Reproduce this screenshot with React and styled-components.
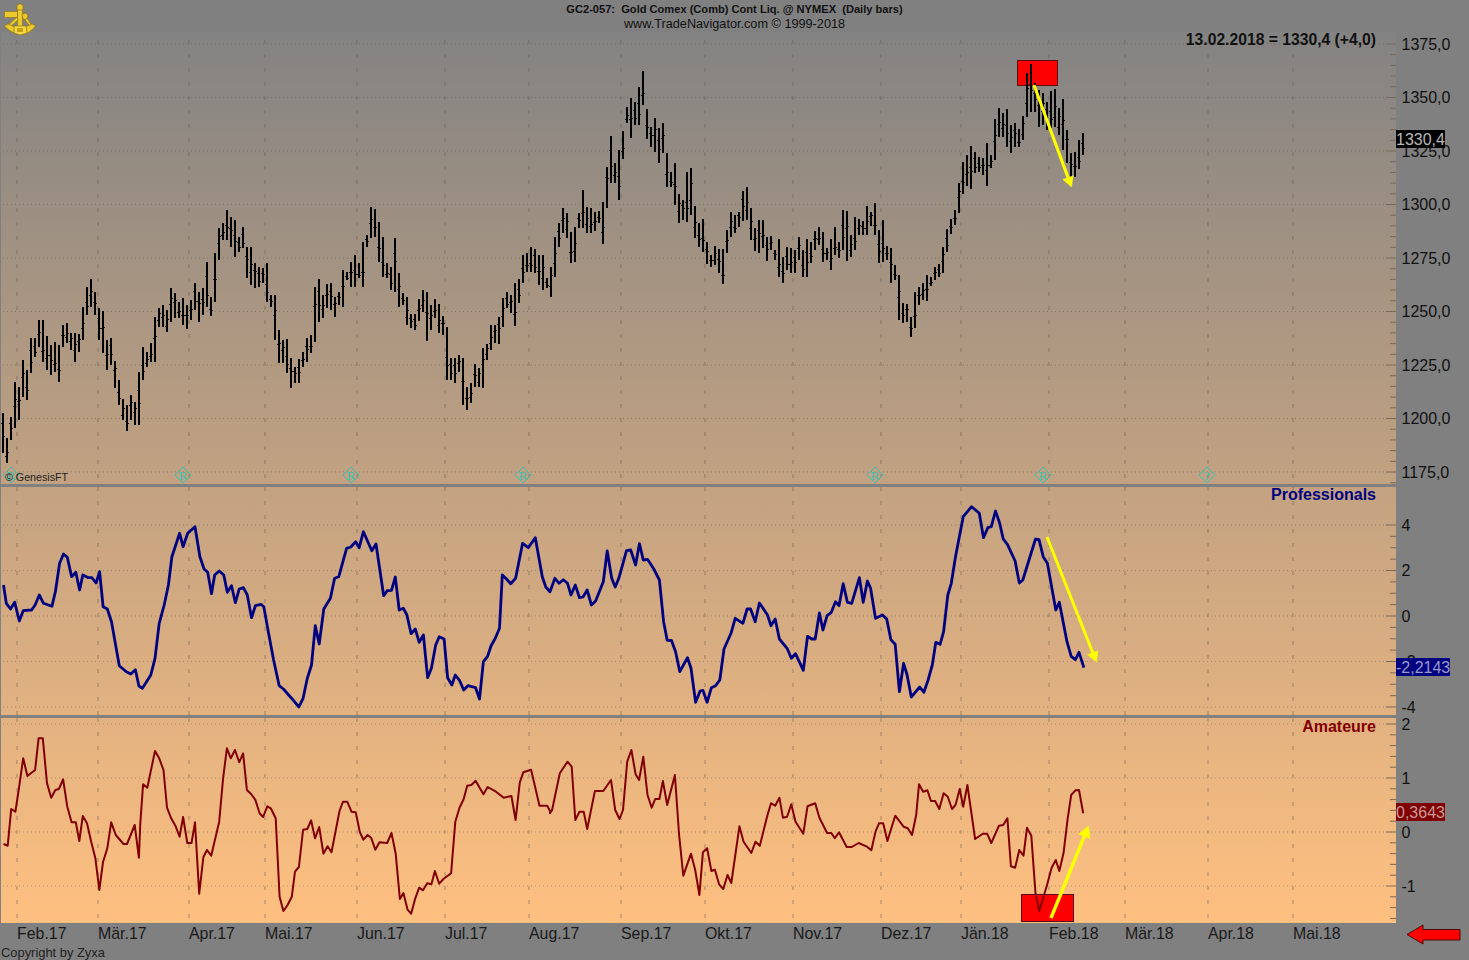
import React from 'react';
import styled, { createGlobalStyle } from 'styled-components';

// colours sampled from the reference
const GREY = '#808080';
const NAVY = '#000080';
const MAROON = '#800000';

const GlobalStyle = createGlobalStyle`
  html, body {
    margin: 0;
    padding: 0;
    background: ${GREY};
    font-family: "Liberation Sans", Arial, sans-serif;
    color: #111;
  }
`;

const Page = styled.div`
  width: 1469px;
  height: 960px;
  display: flex;
  flex-direction: column;
  overflow: hidden;
  background: ${GREY};
`;

const Header = styled.header`
  position: relative;
  height: 32px;
  flex: none;
  text-align: center;
  padding-top: 2px;
  box-sizing: border-box;
`;

const LogoWrap = styled.div`
  position: absolute;
  left: 2px;
  top: 2px;
  width: 36px;
  height: 34px;
`;

const Symbol = styled.div`
  font-size: 11.1px;
  line-height: 15px;
  font-weight: bold;
  white-space: pre;
`;

const Site = styled.div`
  font-size: 12.7px;
  line-height: 15px;
`;

const ChartRow = styled.div`
  display: flex;
  height: 891px;
  flex: none;
`;

const Plot = styled.div`
  width: 1396px;
  display: flex;
  flex-direction: column;
  background: linear-gradient(180deg, #838383 0%, #ffc080 100%);
  box-shadow: inset 1px 0 0 ${GREY};
`;

const Pane = styled.div`
  position: relative;
  height: ${p => p.$h}px;
  flex: none;

  svg {
    display: block;
  }
`;

const Divider = styled.div`
  height: 3px;
  flex: none;
  background: ${GREY};
`;

const ReadOut = styled.div`
  position: absolute;
  right: 20px;
  top: ${p => p.$top}px;
  font-size: ${p => p.$size || 16}px;
  line-height: 20px;
  font-weight: bold;
  color: ${p => p.$color || '#111'};
`;

const Watermark = styled.div`
  position: absolute;
  left: 5px;
  bottom: 0;
  font-size: 10.7px;
  line-height: 13px;
  color: #222;
`;

const Axis = styled.div`
  flex: 1;
  display: flex;
  flex-direction: column;
`;

const AxisPane = styled.div`
  position: relative;
  height: ${p => p.$h}px;
  flex: none;
`;

const AxisLabel = styled.span`
  position: absolute;
  left: 5.5px;
  font-size: 16px;
  line-height: 20px;
  color: #111;
`;

const ValueBox = styled.span`
  position: absolute;
  left: 0;
  height: 18px;
  font-size: 16px;
  line-height: 20px;
  background: ${p => p.$bg};
  color: ${p => p.$fg};
`;

const TimeRow = styled.div`
  height: 22px;
  flex: none;
  display: flex;
  align-items: center;
  padding-left: 17px;
`;

const Month = styled.span`
  flex: none;
  font-size: 15.9px;
  line-height: 20px;
  color: #1a1a1a;
`;

const BackArrow = styled.svg`
  margin-left: auto;
  margin-right: 8px;
  width: 55px;
  height: 21px;
  flex: none;
`;

const Footer = styled.div`
  flex: 1;
  padding-left: 1px;
  font-size: 12.9px;
  line-height: 15px;
  color: #222;
`;

const W = 1396;
const SPLIT = 550;
const XS = 1568 / 550;

const MONTHS = [
  ['Feb.17', 17], ['Mär.17', 98], ['Apr.17', 189], ['Mai.17', 265], ['Jun.17', 357], ['Jul.17', 445],
  ['Aug.17', 529], ['Sep.17', 621], ['Okt.17', 705], ['Nov.17', 793], ['Dez.17', 881], ['Jän.18', 961],
  ['Feb.18', 1049], ['Mär.18', 1125], ['Apr.18', 1208], ['Mai.18', 1293],
];

// hi / lo of each daily bar, traced from crops of the chart
const BARS_A = [
  [670,790],[745,820],[680,750],[575,715],[590,690],[510,620],[540,630],[445,550],[445,500],[390,470],
  [390,515],[438,540],[465,555],[455,545],[465,575],[405,470],[398,460],[430,480],[430,515],[432,485],
  [352,450],[292,375],[268,350],[305,375],[355,450],[362,488],[450,540],[445,525],[512,595],[570,645],
  [628,690],[645,722],[616,690],[635,705],[545,705],[470,570],[485,532],[460,515],[380,515],[355,410],
  [345,412],[360,425],[295,395],[310,385],[335,385],[323,405],[345,418],[330,390],[278,360],[305,395],
  [295,375],[215,350],[320,378],[190,335],[115,210],[100,150],[60,150],[80,170],[90,200],[140,185],
  [110,175],[170,265],[172,285],[220,295],[230,292],[235,280],[220,335],[315,350],[315,450],[420,520],
  [450,520],[448,550],[505,595],[530,578],[508,578],[485,530],[445,515],[435,490],[292,455],[268,395],
  [315,385],[282,355],[278,360],[320,380],[305,345],[240,350],[245,270],[215,290],[195,290],[220,265],
  [155,292],[135,172],[52,145],[58,142],[95,215],[142,260],[220,265],[230,300],[145,305],[248,350],
  [310,345],[320,405],[372,415],[372,420],[328,392],[300,365],[305,452],[345,420],[328,385],[342,430],
  [378,435],[412,570],[505,570],[505,580],[495,545],[505,645],[590,660],[578,638],[522,590],[535,590],
  [475,595],[462,510],[405,480],[405,460],[382,462],[325,412],[305,355],[315,370],[280,408],[268,340],
  [195,280],[190,245],[170,245],[178,248],[195,285],[195,300],[265,295],
].map(([h, l]) => [h / 3 + 190, l / 3 + 190]);

const BARS_B = [
  [620,710],[532,650],[490,560],[445,520],[458,535],[515,610],[500,605],[460,505],[390,505],[440,520],
  [445,518],[455,512],[452,490],[425,553],[320,445],[228,368],[310,368],[270,420],[212,298],[140,190],
  [115,235],[125,195],[80,195],[33,135],[148,238],[200,262],[175,275],[205,310],[190,280],[280,382],
  [335,380],[308,435],[402,490],[420,480],[335,485],[325,465],[438,535],[488,560],[478,575],[545,612],
  [585,620],[558,615],[568,638],[568,672],[510,578],[455,530],[465,520],[455,500],[392,482],[380,480],
  [445,540],[505,572],[480,578],[480,565],[530,603],[528,570],[570,600],[538,650],[590,668],[562,630],
  [565,640],[570,638],[530,600],[570,652],[538,650],[545,610],[512,570],[502,555],[515,605],[565,600],
  [538,630],[500,585],[545,595],[450,570],[452,602],[525,592],[470,570],[478,525],[482,525],[438,525],
  [455,498],[430,525],[510,608],[480,605],[558,600],[565,670],[615,660],[645,780],[728,790],[732,785],
  [770,830],[695,805],[680,735],[668,720],[645,722],[652,678],[620,660],[612,650],[560,638],[508,575],
  [478,522],[450,495],[370,460],[305,402],[285,378],[258,388],[275,340],[290,335],[295,345],[250,378],
  [285,325],[178,300],[145,230],[160,230],[148,262],[195,278],[190,262],[208,260],[168,240],[40,172],
  [12,155],[70,155],[90,200],[98,195],[125,210],[92,205],[88,200],[145,225],[118,270],[210,310],
  [278,350],[275,350],[240,328],[220,285],
].map(([h, l]) => [h / 3 + 60, l / 3 + 60]);

const BARS = [...BARS_A, ...BARS_B];

const BLUE_A = '10,270 18,325 30,342 42,322 55,378 66,347 90,345 100,330 112,300 124,325 148,334 158,290 170,205 181,177 192,187 204,245 216,232 227,285 236,240 252,248 262,248 274,264 284,230 294,335 306,342 318,380 340,512 360,530 373,537 386,524 396,573 406,580 430,540 442,490 454,385 468,330 480,270 490,185 512,115 522,155 535,115 556,95 570,185 582,222 592,232 603,296 612,240 625,228 638,240 648,292 660,272 671,323 682,282 694,278 705,300 717,368 728,332 744,328 752,335 765,410 780,495 796,572 808,582 830,608 852,636 864,610 876,550 888,510 899,392 910,447 923,342 942,310 954,250 966,245 988,160 1000,156 1014,140 1024,158 1036,110 1060,167 1072,147 1094,302 1104,287 1116,286 1127,246 1138,345 1150,340 1160,360 1172,416 1184,402 1195,442 1207,420 1219,548 1230,520 1242,450 1252,425 1266,432 1276,548 1288,570 1298,540 1310,556 1322,585 1334,572 1356,578 1367,612 1378,500 1390,484 1400,452 1412,430 1424,400 1432,240 1444,252 1456,266 1470,250 1490,145 1506,158 1526,128 1546,245 1556,276 1568,290';
const BLUE_B = '0,290 14,250 26,265 38,254 50,265 60,300 72,270 84,308 94,306 106,285 118,330 130,318 152,260 163,168 176,250 186,276 196,250 218,167 230,165 244,210 255,146 266,195 278,193 296,222 312,255 324,380 334,436 346,436 358,470 370,530 392,488 402,520 415,622 428,588 436,586 448,622 460,578 472,572 484,555 496,462 516,415 528,370 550,385 562,342 572,342 585,380 597,324 620,360 630,392 642,372 654,432 676,460 688,490 700,476 722,526 734,424 746,432 756,432 768,354 778,405 790,362 802,352 814,320 824,332 836,266 848,322 860,325 882,248 893,322 905,258 914,280 928,370 948,360 960,372 972,434 984,448 996,590 1008,505 1018,540 1030,606 1054,576 1066,592 1078,555 1090,510 1100,442 1112,448 1122,410 1134,300 1144,265 1156,185 1178,65 1202,35 1224,55 1236,128 1248,98 1258,95 1270,48 1282,85 1292,132 1304,148 1326,198 1338,264 1348,255 1384,132 1394,134 1406,185 1418,205 1442,345 1452,322 1474,440 1486,484 1498,494 1508,472 1522,518';
const RED_A = '10,1047 22,1052 32,942 44,950 54,880 66,790 78,843 100,825 110,730 122,730 134,865 146,908 158,885 168,882 180,853 192,935 204,982 216,982 226,1038 236,963 248,985 260,1040 272,1090 283,1185 294,1100 306,1060 317,982 330,1020 352,1047 362,1047 384,990 396,1088 400,985 408,868 420,878 442,768 454,790 466,825 476,938 488,970 500,992 512,1025 522,966 534,1044 546,1044 556,982 568,1196 580,1086 590,1065 602,1082 625,980 636,850 647,760 658,790 670,765 682,802 693,775 704,885 716,897 728,915 740,955 750,966 762,934 772,940 786,970 797,1205 808,1248 820,1230 832,1205 841,1130 852,1116 864,1004 876,1002 887,976 898,1030 910,996 922,1076 934,1054 945,1072 968,948 978,920 990,920 1002,950 1014,952 1026,1012 1036,1034 1048,1020 1058,1028 1070,1064 1082,1042 1104,1044 1116,1014 1128,1076 1140,1212 1150,1194 1162,1244 1172,1256 1184,1210 1195,1178 1206,1186 1218,1165 1230,1168 1240,1128 1252,1166 1264,1152 1286,1135 1298,980 1310,938 1322,912 1332,872 1344,870 1356,857 1378,898 1390,876 1414,890 1436,908 1458,903 1470,975 1482,862 1492,832 1514,824 1538,932 1560,932 1568,948';
const RED_B = '0,955 6,945 28,835 50,800 62,815 72,975 84,950 96,950 106,1002 128,888 152,888 174,855 186,945 198,972 208,945 220,800 232,765 244,838 254,855 266,785 278,900 290,938 300,912 312,912 322,858 334,930 356,840 368,1020 380,1142 402,1076 414,1125 426,1200 436,1072 448,1060 460,1128 470,1124 482,1168 494,1182 506,1140 517,1164 540,994 552,1040 574,1074 586,1040 598,1052 620,960 630,925 642,932 654,908 664,968 676,965 688,928 700,980 722,1016 734,934 756,925 768,968 790,1014 802,1014 812,1030 824,1012 846,1056 860,1056 880,1044 902,1054 916,1066 928,1010 938,985 950,985 962,1038 984,962 1008,995 1020,1000 1032,1020 1044,960 1052,868 1064,890 1076,886 1086,918 1098,918 1110,942 1122,895 1134,905 1146,942 1156,930 1168,882 1178,935 1190,870 1212,1032 1234,1016 1246,1016 1258,1044 1280,992 1292,990 1304,970 1314,1114 1326,1118 1338,1065 1350,1082 1360,998 1372,1022 1384,1195 1395,1248 1418,1166 1430,1118 1442,1095 1452,1128 1464,1075 1476,970 1486,900 1498,886 1508,885 1520,955';

// crop coordinates back to page coordinates
const toPage = (str, dx) =>
  str.split(' ').map(pt => {
    const [x, y] = pt.split(',').map(Number);
    return `${(dx + x / XS).toFixed(1)},${(y / 3 + 495).toFixed(1)}`;
  }).join(' ');

const bluePts = `${toPage(BLUE_A, 0)} ${toPage(BLUE_B, SPLIT)}`;
const redPts = `${toPage(RED_A, 0)} ${toPage(RED_B, SPLIT)}`;

const rnd = i => {
  const v = Math.sin(i * 12.9898) * 43758.5453;
  return v - Math.floor(v);
};

const Scale = ({ top, height, levels, subdivide, step }) => {
  const bottom = top + height;
  const ticks = [];
  levels.forEach((y, n) => {
    ticks.push(<line key={`M${n}`} x1={W - 10} x2={W} y1={y} y2={y} stroke="#77685a" />);
    for (let k = 1; k < subdivide; k++) {
      const ty = y + (k * step) / subdivide;
      if (ty < bottom) {
        ticks.push(<line key={`m${n}-${k}`} x1={W - 6} x2={W} y1={ty} y2={ty} stroke="#77685a" />);
      }
    }
  });
  return (
    <g>
      {levels.map(y => (
        <line key={y} x1="3" x2={W - 10} y1={y} y2={y} stroke="#5a5048" strokeOpacity=".42" strokeDasharray="1 3" />
      ))}
      {MONTHS.map(([m, x]) => (
        <line key={m} x1={x} x2={x} y1={Math.max(top, 40)} y2={bottom} stroke="#5a5048" strokeOpacity=".5" strokeDasharray="4 10" />
      ))}
      {ticks}
    </g>
  );
};

const Arrow = ({ from, to, width, head }) => {
  const [x1, y1] = from;
  const [x2, y2] = to;
  const len = Math.hypot(x2 - x1, y2 - y1);
  const ux = (x2 - x1) / len;
  const uy = (y2 - y1) / len;
  const bx = x2 - ux * head;
  const by = y2 - uy * head;
  const hw = head * 0.55;
  return (
    <g fill="#ffff00" stroke="#ffff00">
      <line x1={x1} y1={y1} x2={bx} y2={by} strokeWidth={width} />
      <polygon points={`${x2},${y2} ${bx - uy * hw},${by + ux * hw} ${bx + uy * hw},${by - ux * hw}`} strokeWidth=".5" />
    </g>
  );
};

const Marker = ({ x, glyph = 'R' }) => (
  <g stroke="#3dbfb0" fill="none">
    <polygon points={`${x - 8},475 ${x},467 ${x + 8},475 ${x},483`} strokeWidth="1" />
    <text x={x} y="480" textAnchor="middle" fontSize="13" fontFamily="Liberation Serif, serif" fill="#3dbfb0" stroke="none">{glyph}</text>
  </g>
);

const PriceBars = () => (
  <g stroke="#000" shapeRendering="crispEdges">
    {BARS.map(([hi, lo], i) => {
      const x = 3 + i * 4;
      const open = Math.round(hi + (lo - hi) * (0.25 + rnd(i) * 0.5));
      const close = Math.round(hi + (lo - hi) * (0.25 + rnd(i + 500) * 0.5));
      return (
        <g key={i}>
          <line x1={x} x2={x} y1={Math.round(hi)} y2={Math.round(lo)} strokeWidth="2" />
          <line x1={x - 2} x2={x} y1={open} y2={open} strokeWidth="1" />
          <line x1={x} x2={x + 2} y1={close} y2={close} strokeWidth="1" />
        </g>
      );
    })}
  </g>
);

// brass sextant in the top left corner
const Logo = () => (
  <svg viewBox="0 0 36 34" width="36" height="34">
    <g stroke="#8a6a0a" strokeWidth=".6" fill="#e9c92b">
      <rect x="2.5" y="9.5" width="13" height="6" rx="1" />
      <rect x="15" y="2" width="6" height="7" rx="2.5" />
      <rect x="15.5" y="8" width="5" height="18" />
      <path d="M20 12 L24 11 L26 14 L24 18 L21 17 Z" />
      <path d="M25 16 L31 25 L29 26 L23 18 Z" />
      <path d="M15 15 L4 25 L6 27 L16 18 Z" />
      <path d="M2 24 L6 22 Q18 29 30 22 L34 24 Q28 30 24 32 L14 32 Q7 29 2 24 Z" />
      <path d="M12 24 L24 24 L25 31 L18 33 L12 31 Z" fill="#f3da45" />
    </g>
    <rect x="15" y="26" width="6" height="4" fill="#c9a012" />
  </svg>
);

const App = () => {
  const priceYs = [44, 97.5, 151, 204.5, 258, 311.5, 365, 418.5, 472];
  const priceLabels = ['1375,0', '1350,0', '1325,0', '1300,0', '1275,0', '1250,0', '1225,0', '1200,0', '1175,0'];
  const proYs = [525, 570.5, 616, 661.5, 707];
  const proLabels = ['4', '2', '0', '-2', '-4'];
  const amaYs = [724, 778, 832, 886];
  const amaLabels = ['2', '1', '0', '-1'];

  return (
    <Page>
      <GlobalStyle />
      <Header>
        <LogoWrap><Logo /></LogoWrap>
        <Symbol>GC2-057:  Gold Comex (Comb) Cont Liq. @ NYMEX  (Daily bars)</Symbol>
        <Site>www.TradeNavigator.com © 1999-2018</Site>
      </Header>

      <ChartRow>
        <Plot>
          <Pane $h={452}>
            <svg width={W} height="452" viewBox={`0 32 ${W} 452`}>
              <Scale top={32} height={452} levels={priceYs} subdivide={5} step={53.5} />
              {[11, 183, 351, 523, 875, 1043].map(x => <Marker key={x} x={x} />)}
              <Marker x={1207} glyph="?" />
              <rect x="1017.5" y="60.5" width="40" height="25" fill="#ff0000" stroke="#5a1010" />
              <PriceBars />
              <Arrow from={[1034, 85]} to={[1071.5, 187]} width={3} head={10} />
            </svg>
            <ReadOut $top={-2} $size={15.7}>13.02.2018 = 1330,4 (+4,0)</ReadOut>
            <Watermark>© GenesisFT</Watermark>
          </Pane>
          <Divider />
          <Pane $h={228}>
            <svg width={W} height="228" viewBox={`0 487 ${W} 228`}>
              <Scale top={487} height={228} levels={proYs} subdivide={4} step={45.5} />
              <polyline points={bluePts} fill="none" stroke={NAVY} strokeWidth="2.8" strokeLinejoin="round" />
              <Arrow from={[1047, 537]} to={[1096.5, 662]} width={3} head={10} />
            </svg>
            <ReadOut $top={-2} $color={NAVY}>Professionals</ReadOut>
          </Pane>
          <Divider />
          <Pane $h={205}>
            <svg width={W} height="205" viewBox={`0 718 ${W} 205`}>
              <Scale top={718} height={205} levels={amaYs} subdivide={5} step={54} />
              <rect x="1021.5" y="894.5" width="52" height="27" fill="#ff0000" stroke="#5a1010" />
              <polyline points={redPts} fill="none" stroke={MAROON} strokeWidth="2" strokeLinejoin="round" />
              <Arrow from={[1051, 918]} to={[1088.5, 826]} width={3.4} head={11} />
            </svg>
            <ReadOut $top={-1} $color={MAROON}>Amateure</ReadOut>
          </Pane>
        </Plot>

        <Axis>
          <AxisPane $h={455}>
            {priceYs.map((y, i) => (
              <AxisLabel key={y} style={{ top: Math.floor(y) - 32 - 9 }}>{priceLabels[i]}</AxisLabel>
            ))}
            <ValueBox $bg="#000" $fg="#b8b8b8" style={{ top: 98 }}>1330,4</ValueBox>
          </AxisPane>
          <AxisPane $h={231}>
            {proYs.map((y, i) => (
              <AxisLabel key={y} style={{ top: Math.floor(y) - 487 - 9 }}>{proLabels[i]}</AxisLabel>
            ))}
            <ValueBox $bg={NAVY} $fg="#9a9ac8" style={{ top: 171 }}>-2,2143</ValueBox>
          </AxisPane>
          <AxisPane $h={205}>
            {amaYs.map((y, i) => (
              <AxisLabel key={y} style={{ top: y - 718 - 9 }}>{amaLabels[i]}</AxisLabel>
            ))}
            <ValueBox $bg={MAROON} $fg="#c89a9a" style={{ top: 85 }}>0,3643</ValueBox>
          </AxisPane>
        </Axis>
      </ChartRow>

      <TimeRow>
        {MONTHS.map(([m, x], i) => (
          <Month key={m} style={{ width: i < MONTHS.length - 1 ? MONTHS[i + 1][1] - x : 60 }}>{m}</Month>
        ))}
        <BackArrow viewBox="0 0 55 21">
          <polygon points="1,10.5 17,1 17,5.5 54,5.5 54,16 17,16 17,20" fill="#ff0000" stroke="#4a0a0a" />
        </BackArrow>
      </TimeRow>
      <Footer>Copyright by Zyxa</Footer>
    </Page>
  );
};

export default App;
